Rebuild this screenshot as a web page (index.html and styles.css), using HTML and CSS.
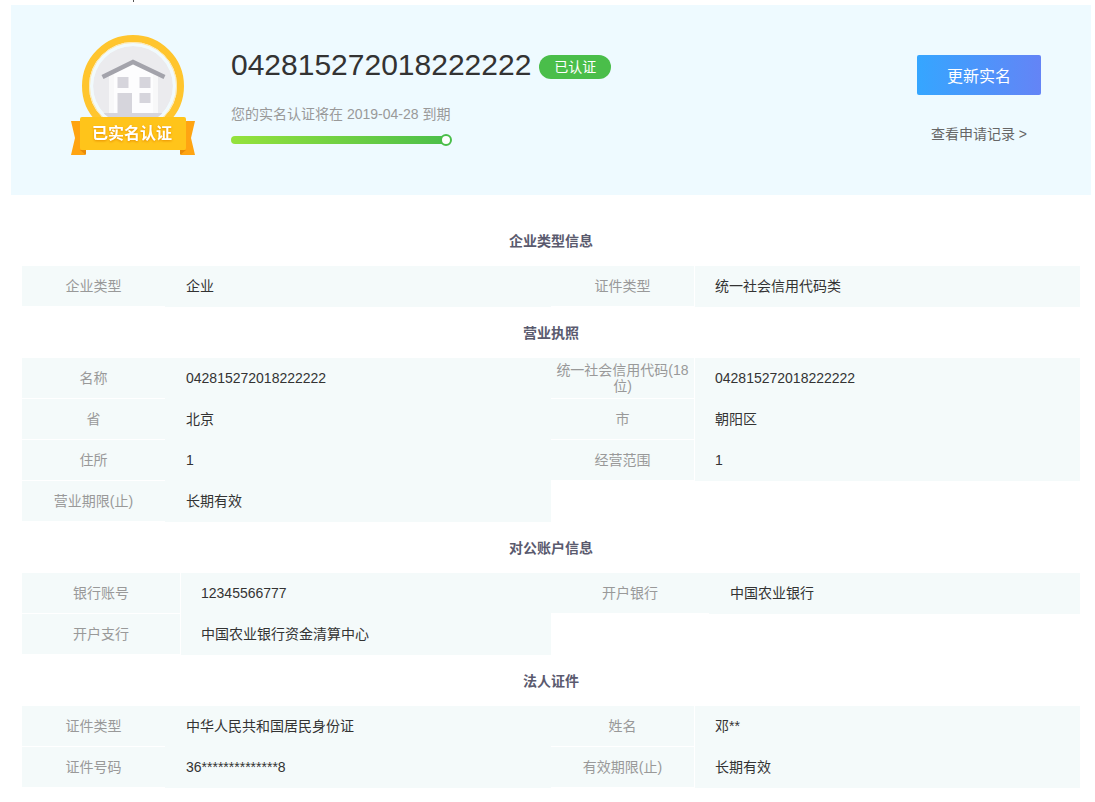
FILE: index.html
```html
<!DOCTYPE html>
<html lang="zh-CN">
<head>
<meta charset="UTF-8">
<meta name="viewport" content="width=device-width, initial-scale=1.0">
<title>实名认证</title>
<link rel="stylesheet" href="styles.css">
</head>
<body>

<div class="topline"></div>

<div class="banner">
    <svg class="medal" width="124" height="122" viewBox="0 0 124 122" role="img" aria-label="已实名认证">
        <defs>
            <clipPath id="disc"><circle cx="62" cy="51" r="40"/></clipPath>
        </defs>
        <circle cx="62" cy="51" r="47.5" fill="#f1fafd" stroke="#ffc52e" stroke-width="7"/>
        <circle cx="62" cy="51" r="43.5" fill="none" stroke="#ffe9ae" stroke-width="1"/>
        <!-- house -->
        <g clip-path="url(#disc)">
            <circle cx="62" cy="51" r="40" fill="#ebebee"/>
            <path d="M38 39 62 27 87 39V79H38z" fill="#f8f8f9"/>
            <path d="M43 37 62 27 82 37V79H43z" fill="#fdfdfe"/>
            <path d="M20 78h84v14H20z" fill="#d6d5dc"/>
            <path d="M46.500 42h11v11h-11zM68.500 42h11v11h-11zM68.500 58h11v10h-11zM46.500 58h14.500v25h-14.500z" fill="#d6d5dc"/>
        </g>
        <path d="M31.500 42 62 27 93.500 42" fill="none" stroke="#a3a3ab" stroke-width="4.500"/>
        <!-- ribbon -->
        <path d="M0 86H14V120H0L4 103zM124 86H110V120H124L120 103z" fill="#ffa412"/>
        <path d="M9 115H15V120zM115 115H109V120z" fill="#e88a08"/>
        <rect x="9" y="82" width="106" height="33" rx="2" fill="#ffc41a"/>
        <text class="medal-text" x="61" y="104" text-anchor="middle">已实名认证</text>
    </svg>

    <div class="info">
        <div class="info-head">
            <h1>042815272018222222</h1>
            <span class="badge">已认证</span>
        </div>
        <p class="expire">您的实名认证将在 2019-04-28 到期</p>
        <div class="progress"><span class="progress-dot"></span></div>
    </div>

    <div class="actions">
        <button type="button" class="btn-update">更新实名</button>
        <a href="#" class="record-link">查看申请记录 &gt;</a>
    </div>
</div>

<div class="detail">
    <h2>企业类型信息</h2>
    <dl class="list">
        <div class="item"><dt>企业类型</dt><dd>企业</dd></div>
        <div class="item"><dt>证件类型</dt><dd>统一社会信用代码类</dd></div>
    </dl>

    <h2>营业执照</h2>
    <dl class="list">
        <div class="item"><dt>名称</dt><dd>042815272018222222</dd></div>
        <div class="item"><dt>统一社会信用代码(18位)</dt><dd>042815272018222222</dd></div>
        <div class="item"><dt>省</dt><dd>北京</dd></div>
        <div class="item"><dt>市</dt><dd>朝阳区</dd></div>
        <div class="item"><dt>住所</dt><dd>1</dd></div>
        <div class="item"><dt>经营范围</dt><dd>1</dd></div>
        <div class="item"><dt>营业期限(止)</dt><dd>长期有效</dd></div>
    </dl>

    <h2>对公账户信息</h2>
    <dl class="list list-bank">
        <div class="item"><dt>银行账号</dt><dd>12345566777</dd></div>
        <div class="item"><dt>开户银行</dt><dd>中国农业银行</dd></div>
        <div class="item"><dt>开户支行</dt><dd>中国农业银行资金清算中心</dd></div>
    </dl>

    <h2>法人证件</h2>
    <dl class="list">
        <div class="item"><dt>证件类型</dt><dd>中华人民共和国居民身份证</dd></div>
        <div class="item"><dt>姓名</dt><dd>邓**</dd></div>
        <div class="item"><dt>证件号码</dt><dd>36**************8</dd></div>
        <div class="item"><dt>有效期限(止)</dt><dd>长期有效</dd></div>
    </dl>
</div>

</body>
</html>
```
FILE: styles.css
```css
* {
    box-sizing: border-box;
}
body {
    margin: 0;
    padding: 0 4px 14px 11px;
    font-family: "Liberation Sans", Arial, "Noto Sans CJK SC", sans-serif;
    font-size: 14px;
    line-height: 16px;
    color: #333;
    background: #fff;
}
h1, h2, p, dl, dd {
    margin: 0;
}

.topline {
    height: 5px;
    padding-left: 122px;
}
.topline::before {
    content: "";
    display: block;
    width: 1px;
    height: 2px;
    background: #555;
}

/* banner */
.banner {
    display: flex;
    align-items: flex-start;
    min-height: 190px;
    padding: 30px 50px 30px 60px;
    background: #eefaff;
}
.medal {
    flex: none;
    margin-right: 36px;
}
.medal-text {
    font-size: 16px;
    font-weight: bold;
    fill: #fff;
    filter: drop-shadow(0 1px 1px #e89000);
}
.info {
    flex: 1;
    padding-top: 10px;
}
.info-head {
    display: flex;
    align-items: center;
    gap: 8px;
    height: 40px;
}
.info-head h1 {
    font-size: 30px;
    line-height: 40px;
    font-weight: normal;
}
.badge {
    width: 72px;
    height: 24px;
    margin-top: 4px;
    border-radius: 12px;
    background: #4abe4a;
    color: #fff;
    line-height: 24px;
    text-align: center;
}
.expire {
    margin-top: 19px;
    line-height: 20px;
    color: #999;
}
.progress {
    position: relative;
    width: 220px;
    height: 8px;
    margin-top: 12px;
    border-radius: 4px;
    background: linear-gradient(to right, #95e23c, #4abe4a);
}
.progress-dot {
    position: absolute;
    top: -2px;
    right: -1px;
    width: 12px;
    height: 12px;
    border: 2px solid #4abe4a;
    border-radius: 50%;
    background: #fff;
}
.actions {
    display: flex;
    flex-direction: column;
    align-items: center;
    padding-top: 20px;
}
.btn-update {
    width: 124px;
    height: 40px;
    padding: 0;
    border: none;
    border-radius: 2px;
    background: linear-gradient(to right, #35a6ff, #6484f6);
    color: #fff;
    font-family: inherit;
    font-size: 16px;
    cursor: pointer;
}
.record-link {
    margin-top: 29px;
    line-height: 20px;
    color: #666;
    text-decoration: none;
}

/* detail lists */
.detail {
    padding: 20px 11px 0;
}
.detail h2 {
    font-size: 14px;
    line-height: 52px;
    height: 51px;
    text-align: center;
    color: #5a5a6e;
}
.list {
    display: grid;
    grid-template-columns: 1fr 1fr;
}
.item {
    display: flex;
    height: 41px;
    background: #f4fafa;
}
.item dt {
    display: flex;
    flex: none;
    align-items: center;
    justify-content: center;
    width: 143px;
    border-bottom: 1px solid #fff;
    color: #999;
    text-align: center;
}
.item dd {
    flex: 1;
    padding-left: 21px;
    line-height: 41px;
}
.list-bank dt {
    width: 158px;
}
.item:nth-child(even) dd,
.list-bank .item:nth-child(odd) dd {
    box-shadow: inset 1px 0 #fff;
}
.list-bank .item:nth-child(even) dd {
    box-shadow: none;
}
```
